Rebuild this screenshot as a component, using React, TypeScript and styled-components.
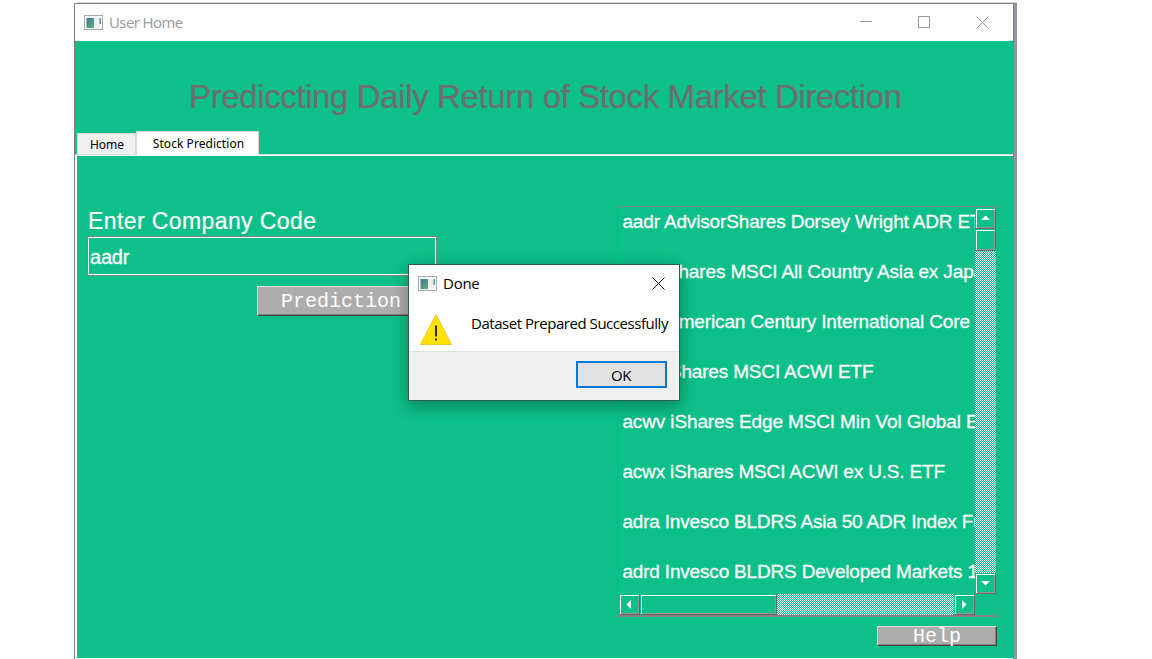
import React from "react";
import styled, { createGlobalStyle } from "styled-components";

const GREEN = "#0dbf88";
const SANS = '"Liberation Sans", Arial, sans-serif';
const UI = '"Open Sans", "Segoe UI", sans-serif';
const TAB_FONT = '"Noto Sans", Tahoma, sans-serif';

const Global = createGlobalStyle`
  * { box-sizing: border-box; }
  body { margin: 0; background: #fff; height: 659px; overflow: hidden; }
`;

const Desktop = styled.div`
  height: 659px;
  padding: 3px 0 0 74px;
  overflow: hidden;
`;

const WindowFrame = styled.div`
  width: 940px;
  height: 656px;
  border: 1px solid #808080;
  border-bottom: 0;
  box-shadow: 3px 0 0 #9296a1, 3px -1px 0 #d4d4d8;
  background: #fff;
  display: flex;
  flex-direction: column;
`;

const TitleBar = styled.div`
  height: 37px;
  flex: none;
  display: flex;
  align-items: center;
  padding: 0 24px 0 9px;
  background: #fff;
`;

const Label = styled.span<{ $size: number; $color?: string; $spacing?: number; $family?: string }>`
  font-family: ${(p) => p.$family ?? UI};
  font-size: ${(p) => p.$size}px;
  color: ${(p) => p.$color ?? "#000"};
  letter-spacing: ${(p) => p.$spacing ?? 0}px;
  line-height: 1;
  white-space: nowrap;
`;

const WindowTitle = styled(Label)`
  margin-left: 6px;
  flex: 1;
`;

const WindowButtons = styled.div`
  display: flex;
  gap: 45px;
  margin-top: -1px;
  svg { display: block; }
`;

const Client = styled.div`
  background: ${GREEN};
  flex: 1;
  display: flex;
  flex-direction: column;
  min-height: 0;
`;

const Heading = styled.h1`
  margin: 0;
  height: 90px;
  padding: 37px 0 0 114px;
  font: 400 33px/38px ${SANS};
  letter-spacing: -0.38px;
  color: #6e6e6e;
  -webkit-text-stroke: 0.2px #6e6e6e;
  white-space: nowrap;
`;

const TabBar = styled.div`
  display: flex;
  align-items: flex-end;
  height: 25px;
  padding: 0 0 1px 2px;
  border-bottom: 1px solid #fff;
  box-shadow: inset 0 -1px 0 #dcdcdc;
`;

const Tab = styled.div<{ $active?: boolean }>`
  width: ${(p) => (p.$active ? 123 : 59)}px;
  height: ${(p) => (p.$active ? 24 : 21)}px;
  margin-bottom: ${(p) => (p.$active ? -1 : 0)}px;
  padding: ${(p) => (p.$active ? "0 0 0 2px" : "2px 0 0 1px")};
  background: ${(p) => (p.$active ? "#fff" : "#f0f0f0")};
  border: 1px solid #d9d9d9;
  border-bottom: 0;
  display: flex;
  align-items: center;
  justify-content: center;
`;

const Page = styled.div`
  height: 503px;
  border-left: 2px solid #fff;
  border-bottom: 1px solid #fff;
  display: flex;
  justify-content: space-between;
  padding: 50px 15px 0 10px;
`;

const Form = styled.div`
  width: 350px;
  display: flex;
  flex-direction: column;
`;

const FieldLabel = styled.label`
  height: 30px;
  padding: 1px 0 0 1px;
  font: 400 23px/29px ${SANS};
  letter-spacing: 0.4px;
  color: #fff;
  -webkit-text-stroke: 0.2px #fff;
  white-space: nowrap;
`;

const Field = styled.div`
  height: 40px;
  border: 1px solid #808080;
  box-shadow: inset 0 0 0 1px #fff;
  padding: 0 2px;
  font: 400 20px/41px ${SANS};
  letter-spacing: -0.2px;
  color: #fff;
  -webkit-text-stroke: 0.3px #fff;
`;

const PushButton = styled.button<{ $width: number; $height: number }>`
  width: ${(p) => p.$width}px;
  height: ${(p) => p.$height}px;
  padding: 1px 0 0;
  border: 1px solid;
  border-color: #dcdcdc #404040 #404040 #dcdcdc;
  box-shadow: inset -1px -1px 0 #808080;
  background: #adadad;
  color: #fff;
  font: 400 20px/1 "Liberation Mono", "Courier New", monospace;
  display: flex;
  align-items: center;
  justify-content: center;
`;

const PredictionButton = styled(PushButton)`
  align-self: flex-end;
  margin: 10px 12px 0 0;
`;

const Side = styled.div`
  width: 381px;
  display: flex;
  flex-direction: column;
  align-items: flex-end;
`;

const ListBox = styled.div`
  width: 381px;
  height: 411px;
  border: 1px solid #808080;
  border-bottom-width: 2px;
  padding: 1px;
  display: grid;
  grid-template: 386px 21px / 356px 21px;
`;

const Rows = styled.div`
  overflow: hidden;
  padding-left: 3.4px;
`;

const Row = styled.div<{ $spacing: number }>`
  height: 50px;
  padding-top: 1px;
  font: 400 19px/25px ${SANS};
  letter-spacing: ${(p) => p.$spacing}px;
  color: #fff;
  -webkit-text-stroke: 0.3px #fff;
  white-space: nowrap;
`;

const Track = styled.div<{ $vertical?: boolean }>`
  display: flex;
  flex-direction: ${(p) => (p.$vertical ? "column" : "row")};
  background: repeating-conic-gradient(#fff 0 25%, ${GREEN} 0 50%) 0 0 / 2px 2px;
`;

const Thumb = styled.div<{ $w: number; $h: number }>`
  width: ${(p) => p.$w}px;
  height: ${(p) => p.$h}px;
  flex: none;
  background: ${GREEN};
  border: 1px solid;
  border-color: ${GREEN} #6a6a6a #6a6a6a ${GREEN};
  box-shadow: inset 1px 1px 0 #fff, inset -1px -1px 0 #949494;
  display: flex;
  align-items: center;
  justify-content: center;
`;

const Spacer = styled.div`
  flex: 1;
`;

const HelpButton = styled(PushButton)`
  margin: 9px 1px 0 0;
  padding-top: 2px;
`;

const Dialog = styled.div`
  position: absolute;
  left: 408px;
  top: 264px;
  width: 272px;
  height: 137px;
  border: 1px solid #2c5f4f;
  background: #fff;
  box-shadow: 0 5px 16px rgba(0, 0, 0, 0.32);
  display: flex;
  flex-direction: column;
`;

const DialogTitle = styled.div`
  display: flex;
  height: 37px;
  align-items: center;
  padding: 0 14px 0 9px;
`;

const DialogBody = styled.div`
  display: flex;
  height: 49px;
  padding-left: 11px;
`;

const WarningSign = styled.svg`
  margin-top: 11px;
`;

const Message = styled(Label)`
  margin: 14px 0 0 19px;
`;

const DialogFooter = styled.div`
  flex: 1;
  border-top: 1px solid #dfdfdf;
  background: #f0f0f0;
  display: flex;
  justify-content: flex-end;
  padding: 9px 12px 0 0;
`;

const OkButton = styled.button`
  width: 91px;
  height: 27px;
  padding: 2px 1px 0 0;
  border: 2px solid #0078d7;
  background: #e1e1e1;
`;

const AppIcon = () => (
  <svg width="19" height="16" viewBox="0 0 19 16">
    <defs>
      <linearGradient id="pic" x1="0" y1="0" x2="1" y2="1">
        <stop offset="0" stopColor="#44739b" />
        <stop offset="1" stopColor="#5fb274" />
      </linearGradient>
    </defs>
    <rect x="0.5" y="0.5" width="18" height="14" fill="#f8f9fa" stroke="#a3aab1" />
    <rect x="2.500" y="3" width="7.500" height="10" fill="url(#pic)" />
    <rect x="11" y="3" width="5" height="10" fill="#eef0f3" />
    <rect x="15.500" y="3" width="1.500" height="6" fill="#559b91" />
  </svg>
);

const CloseIcon = ({ color }: { color: string }) => (
  <svg width="13" height="13" viewBox="0 0 13 13" stroke={color} fill="none">
    <path d="M.5.5l12 12M12.500.5l-12 12" />
  </svg>
);

const Arrow = ({ d }: { d: string }) => (
  <svg width="9" height="9" viewBox="0 0 9 9" fill="#fff">
    <path d={d} />
  </svg>
);

const WarningIcon = () => (
  <WarningSign width="32" height="33" viewBox="0 0 32 33">
    <path d="M16 1.500L31.500 31.500H.5z" fill="#ffe000" stroke="#fbc62d" />
    <path d="M16 12.500v11" stroke="#302c10" strokeWidth="2" />
    <path d="M16 25.500v2" stroke="#302c10" strokeWidth="2" />
  </WarningSign>
);

const companies = [
  { text: "aadr AdvisorShares Dorsey Wright ADR ETF", spacing: -0.15 },
  { text: "aaxj iShares MSCI All Country Asia ex Japan ETF", spacing: -0.14 },
  { text: "acim American Century International Core", spacing: -0.13 },
  { text: "acwi iShares MSCI ACWI ETF", spacing: -0.17 },
  { text: "acwv iShares Edge MSCI Min Vol Global ETF", spacing: -0.13 },
  { text: "acwx iShares MSCI ACWI ex U.S. ETF", spacing: -0.17 },
  { text: "adra Invesco BLDRS Asia 50 ADR Index Fund", spacing: -0.19 },
  { text: "adrd Invesco BLDRS Developed Markets 100", spacing: -0.18 },
];

export default function App() {
  return (
    <Desktop>
      <Global />
      <WindowFrame>
        <TitleBar>
          <AppIcon />
          <WindowTitle $size={15} $color="#999" $spacing={-0.6}>User Home</WindowTitle>
          <WindowButtons>
            <svg width="13" height="13" stroke="#999"><path d="M0 5.500h12" /></svg>
            <svg width="13" height="13" stroke="#999" fill="none"><path d="M.5.5h11v11H.5z" /></svg>
            <CloseIcon color="#999" />
          </WindowButtons>
        </TitleBar>
        <Client>
          <Heading>Prediccting Daily Return of Stock Market Direction</Heading>
          <TabBar>
            <Tab><Label $size={12} $family={TAB_FONT}>Home</Label></Tab>
            <Tab $active><Label $size={12} $spacing={0.05} $family={TAB_FONT}>Stock Prediction</Label></Tab>
          </TabBar>
          <Page>
            <Form>
              <FieldLabel>Enter Company Code</FieldLabel>
              <Field>aadr</Field>
              <PredictionButton $width={168} $height={30}>Prediction</PredictionButton>
            </Form>
            <Side>
              <ListBox>
                <Rows>
                  {companies.map((c) => (
                    <Row key={c.text} $spacing={c.spacing}>{c.text}</Row>
                  ))}
                </Rows>
                <Track $vertical>
                  <Thumb $w={21} $h={21}><Arrow d="M0 6h9L4.500 1.500z" /></Thumb>
                  <Thumb $w={21} $h={22} />
                  <Spacer />
                  <Thumb $w={21} $h={21}><Arrow d="M0 2h9L4.500 6.500z" /></Thumb>
                </Track>
                <Track>
                  <Thumb $w={21} $h={21}><Arrow d="M6 0v9L1.500 4.500z" /></Thumb>
                  <Thumb $w={137} $h={21} />
                  <Spacer />
                  <Thumb $w={21} $h={21}><Arrow d="M2 0v9L6.500 4.500z" /></Thumb>
                </Track>
              </ListBox>
              <HelpButton $width={120} $height={20}>Help</HelpButton>
            </Side>
          </Page>
        </Client>
      </WindowFrame>
      <Dialog>
        <DialogTitle>
          <AppIcon />
          <WindowTitle $size={15} $spacing={-0.25}>Done</WindowTitle>
          <CloseIcon color="#000" />
        </DialogTitle>
        <DialogBody>
          <WarningIcon />
          <Message $size={15} $spacing={-0.46}>Dataset Prepared Successfully</Message>
        </DialogBody>
        <DialogFooter>
          <OkButton><Label $size={15} $spacing={-0.4}>OK</Label></OkButton>
        </DialogFooter>
      </Dialog>
    </Desktop>
  );
}
